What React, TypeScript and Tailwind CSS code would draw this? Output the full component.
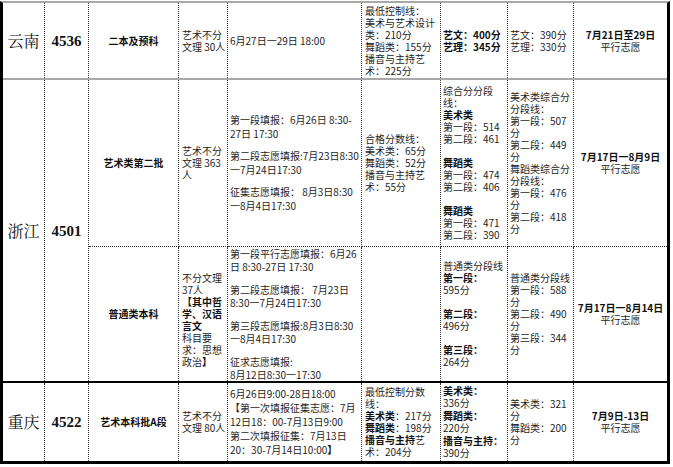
import React from "react";

const C = "border-r border-dotted border-[#333] flex items-center overflow-visible whitespace-nowrap";
const CB = "border-r border-b border-dotted border-[#333] flex items-center overflow-visible whitespace-nowrap";
const L = "border-dotted border-[#333] flex items-center overflow-visible whitespace-nowrap";

function Prov({ name, code, extra = "" }: { name: string; code: string; extra?: string }) {
  return (
    <>
      <div className={`${C} ${extra} justify-center text-[16px] leading-[20px] text-[#111] font-['Noto_Serif_CJK_SC','Noto_Sans_CJK_SC',serif]`}>
        {name}
      </div>
      <div className={`${C} ${extra} justify-center text-[15px] leading-[20px] font-bold text-[#111] font-['Liberation_Serif',serif]`}>
        {code}
      </div>
    </>
  );
}

function End({ date, cls }: { date: string; cls: string }) {
  return (
    <div className={`${cls} justify-center text-center`}>
      <div>
        <div className="font-bold text-[#111]">{date}</div>
        <div>平行志愿</div>
      </div>
    </div>
  );
}

export default function App() {
  return (
    <div className="w-[673px] h-[467px] bg-white pt-px font-['Noto_Sans_CJK_SC',sans-serif] text-[10px] leading-[12px] text-[#1e1e1e]">
      <div className="grid w-[670px] grid-cols-[42px_44px_90px_49px_134px_79px_67px_66px_93px] grid-rows-[75px_2px_167px_134px_2px_78px] border-l-[3px] border-r-[3px] border-t-2 border-b-[3px] border-black border-t-[#a8a8a8]">
        {/* Yunnan */}
        <Prov name="云南" code="4536" />
        <div className={`${C} justify-center font-bold text-[#111]`}>二本及预科</div>
        <div className={`${C} pl-[3px]`}>
          <div>艺术不分<br />文理 30人</div>
        </div>
        <div className={`${C} pl-[2px]`}>6月27日一29日 18:00</div>
        <div className={`${C} pl-[3px]`}>
          <div>
            最低控制线：<br />美术与艺术设计<br />类：210分<br />舞蹈类：155分<br />播音与主持艺<br />术：225分
          </div>
        </div>
        <div className={`${C} pl-[2px] font-bold text-[#111]`}>
          <div>艺文：400分<br />艺理：345分</div>
        </div>
        <div className={`${C} pl-[2px]`}>
          <div>艺文：390分<br />艺理：330分</div>
        </div>
        <End date="7月21日至29日" cls={L} />

        <div className="col-span-9 bg-[#a8a8a8]" />

        {/* Zhejiang */}
        <Prov name="浙江" code="4501" extra="row-span-2" />
        <div className={`${CB} justify-center font-bold text-[#111]`}>艺术类第二批</div>
        <div className={`${CB} pl-[3px]`}>
          <div>艺术不分<br />文理 363<br />人</div>
        </div>
        <div className={`${CB} pl-[2px] leading-[14px]`}>
          <div className="flex flex-col gap-[8px]">
            <div>第一段填报：6月26日 8:30-<br />27日 17:30</div>
            <div>第二段志愿填报:7月23日8:30<br />一7月24日17:30</div>
            <div>征集志愿填报： 8月3日8:30<br />一8月4日17:30</div>
          </div>
        </div>
        <div className={`${CB} pl-[3px]`}>
          <div>
            合格分数线：<br />美术类：65分<br />舞蹈类：52分<br />播音与主持艺<br />术：55分
          </div>
        </div>
        <div className={`${CB} pl-[2px]`}>
          <div className="flex flex-col gap-[12px]">
            <div>综合分分段<br />线：<br /><b className="text-[#111]">美术类</b><br />第一段：514<br />第二段：461</div>
            <div><b className="text-[#111]">舞蹈类</b><br />第一段：474<br />第二段：406</div>
            <div><b className="text-[#111]">舞蹈类</b><br />第一段：471<br />第二段：390</div>
          </div>
        </div>
        <div className={`${CB} pl-[2px]`}>
          <div>
            美术类综合分<br />分段线：<br />第一段：507<br />分<br />第二段：449<br />分<br />舞蹈类综合分<br />分段线：<br />第一段：476<br />分<br />第二段：418<br />分
          </div>
        </div>
        <End date="7月17日一8月9日" cls={`${L} border-b`} />

        <div className={`${C} justify-center font-bold text-[#111]`}>普通类本科</div>
        <div className={`${C} pl-[3px]`}>
          <div className="mt-[12px]">
            不分文理<br />37人<br />
            <b className="text-[#111]">【其中哲<br />学、汉语<br />言文</b><br />
            科目要<br />求：思想<br />政治<b className="text-[#111]">】</b>
          </div>
        </div>
        <div className={`${C} pl-[2px] leading-[13px]`}>
          <div className="flex flex-col gap-[10px]">
            <div>第一段平行志愿填报：6月26<br />日 8:30-27日 17:30</div>
            <div>第二段志愿填报： 7月23日<br />8:30一7月24日17:30</div>
            <div>第三段志愿填报:8月3日8:30<br />一8月4日17:30</div>
            <div>征求志愿填报:<br />8月12日8:30一17:30</div>
          </div>
        </div>
        <div className={C} />
        <div className={`${C} pl-[2px]`}>
          <div className="flex flex-col gap-[12px]">
            <div>普通类分段线<br /><b className="text-[#111]">第一段：</b><br />595分</div>
            <div><b className="text-[#111]">第二段：</b><br />496分</div>
            <div><b className="text-[#111]">第三段：</b><br />264分</div>
          </div>
        </div>
        <div className={`${C} pl-[2px]`}>
          <div>
            普通类分段线<br />第一段：588<br />分<br />第二段：490<br />分<br />第三段：344<br />分
          </div>
        </div>
        <End date="7月17日一8月14日" cls={L} />

        <div className="col-span-9 bg-black" />

        {/* Chongqing */}
        <Prov name="重庆" code="4522" />
        <div className={`${C} justify-center font-bold text-[#111]`}>艺术本科批A段</div>
        <div className={`${C} pl-[3px]`}>
          <div>艺术不分<br />文理 80人</div>
        </div>
        <div className={`${C} pl-[2px] leading-[14px]`}>
          <div>
            6月26日9:00-28日18:00<br />【第一次填报征集志愿：7月<br />12日18：00-7月13日9:00<br />第二次填报征集：7月13日<br />20：30-7月14日10:00<b className="text-[#111]">】</b>
          </div>
        </div>
        <div className={`${C} pl-[3px]`}>
          <div>
            最低控制分数<br />线：<br /><b className="text-[#111]">美术类</b>：217分<br /><b className="text-[#111]">舞蹈类</b>：198分<br /><b className="text-[#111]">播音与主持</b>艺<br />术：204分
          </div>
        </div>
        <div className={`${C} pl-[2px] leading-[12.5px] font-bold text-[#111]`}>
          <div>
            美术类：<br /><span className="font-normal text-[#1e1e1e]">336分</span><br />舞蹈类：<br /><span className="font-normal text-[#1e1e1e]">220分</span><br />播音与主持：<br /><span className="font-normal text-[#1e1e1e]">390分</span>
          </div>
        </div>
        <div className={`${C} pl-[2px]`}>
          <div>美术类：321<br />分<br />舞蹈类：200<br />分</div>
        </div>
        <End date="7月9日-13日" cls={L} />
      </div>
    </div>
  );
}
